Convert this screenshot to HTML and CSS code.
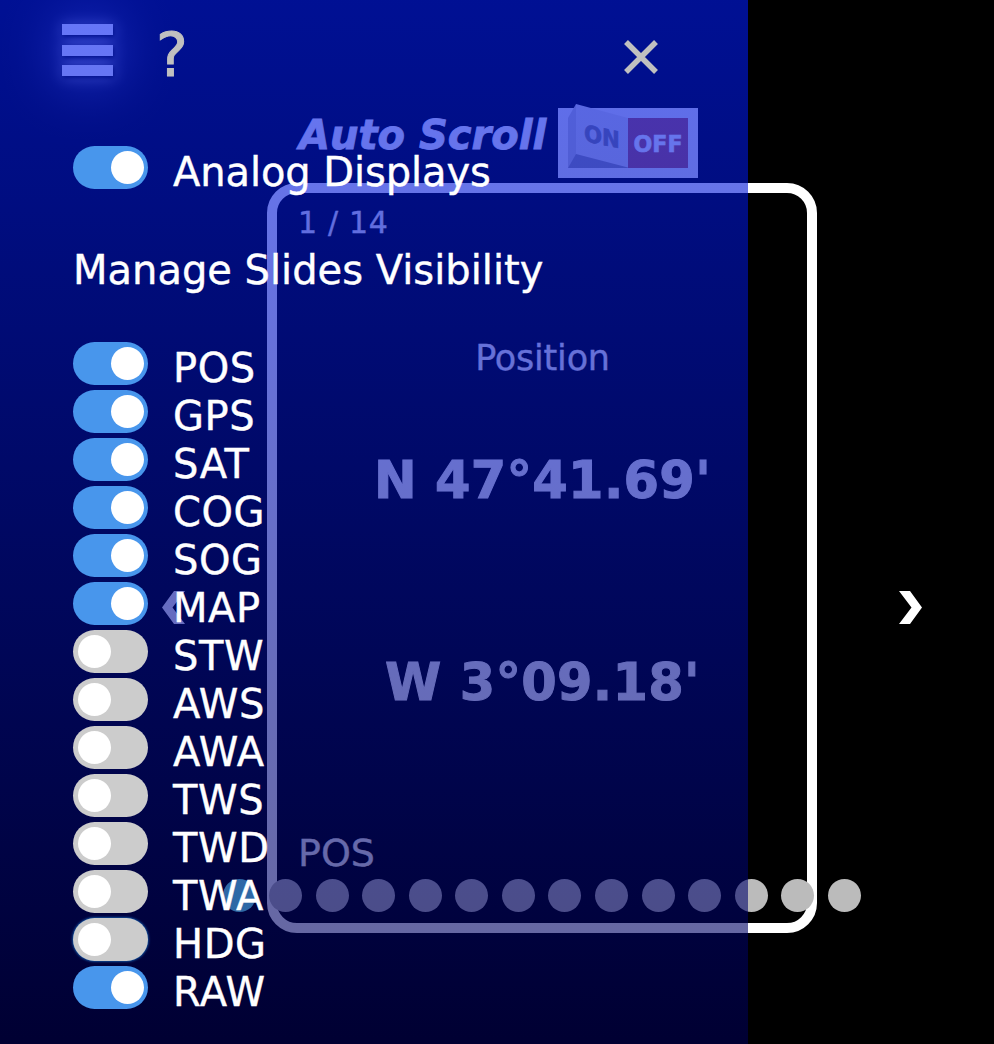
FILE: index.html
```
<!DOCTYPE html>
<html lang="en">
<head>
<meta charset="utf-8">
<title>Analog Displays</title>
<link rel="stylesheet" href="styles.css">
</head>
<body>
<main class="page">
  <div class="burger"><i></i><i></i><i></i></div>
  <div class="scroll-bar">
    <span class="scroll-label">Auto Scroll</span>
    <svg class="rocker" width="140" height="78" viewBox="0 4 140 78">
      <rect y="8" width="140" height="70" fill="#eee"/>
      <rect x="10" y="18" width="60" height="50" fill="#999"/>
      <rect x="70" y="18" width="60" height="50" fill="#b55b58"/>
      <path d="M10 18L18 4V54L10 68Z" fill="#c8c8c8"/>
      <path d="M18 4L70 18V67.500L18 54Z" fill="#ddd"/>
      <text class="rocker-on" transform="matrix(.97 .2 0 1 26 41)" textLength="37" lengthAdjust="spacingAndGlyphs">ON</text>
      <text class="rocker-off" x="75.500" y="52" textLength="49" lengthAdjust="spacingAndGlyphs">OFF</text>
    </svg>
  </div>
  <div class="stage">
    <svg class="arrow" width="23" height="33" viewBox="0 0 23 34" preserveAspectRatio="none"><path d="M23 0H12L0 17L12 34H23L10.500 17Z" fill="#fff"/></svg>
    <section class="card">
      <div class="count">1 / 14</div>
      <div class="title">Position</div>
      <div class="value">N 47°41.69'</div>
      <div class="value second">W 3°09.18'</div>
      <div class="caption">POS</div>
    </section>
    <svg class="arrow" width="23" height="33" viewBox="0 0 23 34" preserveAspectRatio="none"><path d="M0 0H11L23 17L11 34H0L12.500 17Z" fill="#fff"/></svg>
  </div>
  <div class="dots"><i class="active"></i><i></i><i></i><i></i><i></i><i></i><i></i><i></i><i></i><i></i><i></i><i></i><i></i><i></i></div>
</main>
<aside class="panel">
  <header class="panel-head">
    <span class="help">?</span>
    <svg class="close" width="34" height="34" viewBox="0 0 34 34"><path d="M2 2L32 32M32 2L2 32" stroke="#c0c0c0" stroke-width="5.500"/></svg>
  </header>
  <div class="row"><span class="switch on"></span><span>Analog Displays</span></div>
  <h1 class="heading">Manage Slides Visibility</h1>
  <div class="rows">
    <div class="row"><span class="switch on"></span><span>POS</span></div>
    <div class="row"><span class="switch on"></span><span>GPS</span></div>
    <div class="row"><span class="switch on"></span><span>SAT</span></div>
    <div class="row"><span class="switch on"></span><span>COG</span></div>
    <div class="row"><span class="switch on"></span><span>SOG</span></div>
    <div class="row"><span class="switch on"></span><span>MAP</span></div>
    <div class="row"><span class="switch"></span><span>STW</span></div>
    <div class="row"><span class="switch"></span><span>AWS</span></div>
    <div class="row"><span class="switch"></span><span>AWA</span></div>
    <div class="row"><span class="switch"></span><span>TWS</span></div>
    <div class="row"><span class="switch"></span><span>TWD</span></div>
    <div class="row"><span class="switch"></span><span>TWA</span></div>
    <div class="row"><span class="switch focus"></span><span>HDG</span></div>
    <div class="row"><span class="switch on"></span><span>RAW</span></div>
  </div>
</aside>
</body>
</html>
```
FILE: styles.css
```
* { box-sizing: border-box; }
body {
  margin: 0;
  width: 994px;
  height: 1044px;
  position: relative;
  overflow: hidden;
  background: #000;
  color: #fff;
  font-family: Verdana, "DejaVu Sans", sans-serif;
}
.page { height: 1044px; padding-top: 24px; display: flex; flex-direction: column; }
.burger {
  width: 51px;
  height: 52px;
  margin-left: 62px;
  display: flex;
  flex-direction: column;
  justify-content: space-between;
  filter: drop-shadow(1px 2px 2px #000) drop-shadow(0 0 7px rgba(255,255,255,.45)) drop-shadow(0 0 28px rgba(150,160,255,.7));
}
.burger i { height: 11px; background: #fff; }
.scroll-bar { height: 78px; margin: 28px 0 0 299px; width: 399px; display: flex; justify-content: space-between; }
.scroll-label {
  font: italic bold 40px/62px Verdana, "DejaVu Sans", sans-serif;
  white-space: nowrap;
  -webkit-text-stroke: .8px #fff;
}
.rocker text { font-weight: bold; font-size: 23px; stroke-width: .6px; }
.rocker-on { fill: #888; stroke: #888; }
.rocker-off { fill: #fff; stroke: #fff; }
.stage { margin: 1px 72px 0 162px; height: 750px; display: flex; justify-content: space-between; align-items: center; }
.arrow { position: relative; top: 49.5px; }
.card {
  width: 550px;
  height: 750px;
  border: 10px solid #fff;
  border-radius: 30px;
  padding: 15px 20px 0 21px;
  text-align: center;
}
.count { font-size: 30px; line-height: 30px; text-align: left; color: #f2f2f2; letter-spacing: .7px; -webkit-text-stroke: .3px #f2f2f2; }
.title { margin-top: 99px; font-size: 35px; line-height: 42px; letter-spacing: -.2px; -webkit-text-stroke: .3px #fff; }
.value { margin-top: 72px; font-size: 51px; line-height: 60px; font-weight: bold; letter-spacing: .3px; -webkit-text-stroke: 1px #fff; }
.value.second { margin-top: 142px; }
.caption { margin-top: 118px; font-size: 38px; line-height: 44px; text-align: left; -webkit-text-stroke: .3px #fff; }
.dots { margin: -54px 133px 0 222.5px; display: flex; justify-content: space-between; position: relative; }
.dots i { width: 33px; height: 33px; border-radius: 50%; background: #bbb; }
.dots .active { background: #72ffff; }
.panel {
  position: absolute;
  top: 0;
  left: 0;
  width: 748px;
  height: 1044px;
  padding-left: 73px;
  font-size: 40px;
  -webkit-text-stroke: .4px;
  background: linear-gradient(rgba(0,27,246,.6), rgba(0,0,84,.6));
}
.panel-head { height: 146px; display: flex; justify-content: space-between; padding: 19px 90px 0 83px; color: #c0c0c0; }
.help { font-size: 60px; line-height: 72px; -webkit-text-stroke: 1px; }
.close { margin-top: 21px; }
.row { height: 48px; display: flex; gap: 25px; line-height: 52px; white-space: nowrap; letter-spacing: -.1px; }
.rows .row { letter-spacing: .6px; }
.switch { width: 75px; height: 43px; border-radius: 22px; padding: 5px; background: #ccc; }
.switch::before { content: ""; display: block; width: 33px; height: 33px; border-radius: 50%; background: #fff; }
.switch.on { background: #4896ec; }
.switch.on::before { margin-left: 32.5px; }
.switch.focus { box-shadow: 0 0 3px #2196f3; }
.heading { margin: 50px 0 0; height: 98px; font-size: 40px; line-height: 52px; font-weight: normal; }
```
